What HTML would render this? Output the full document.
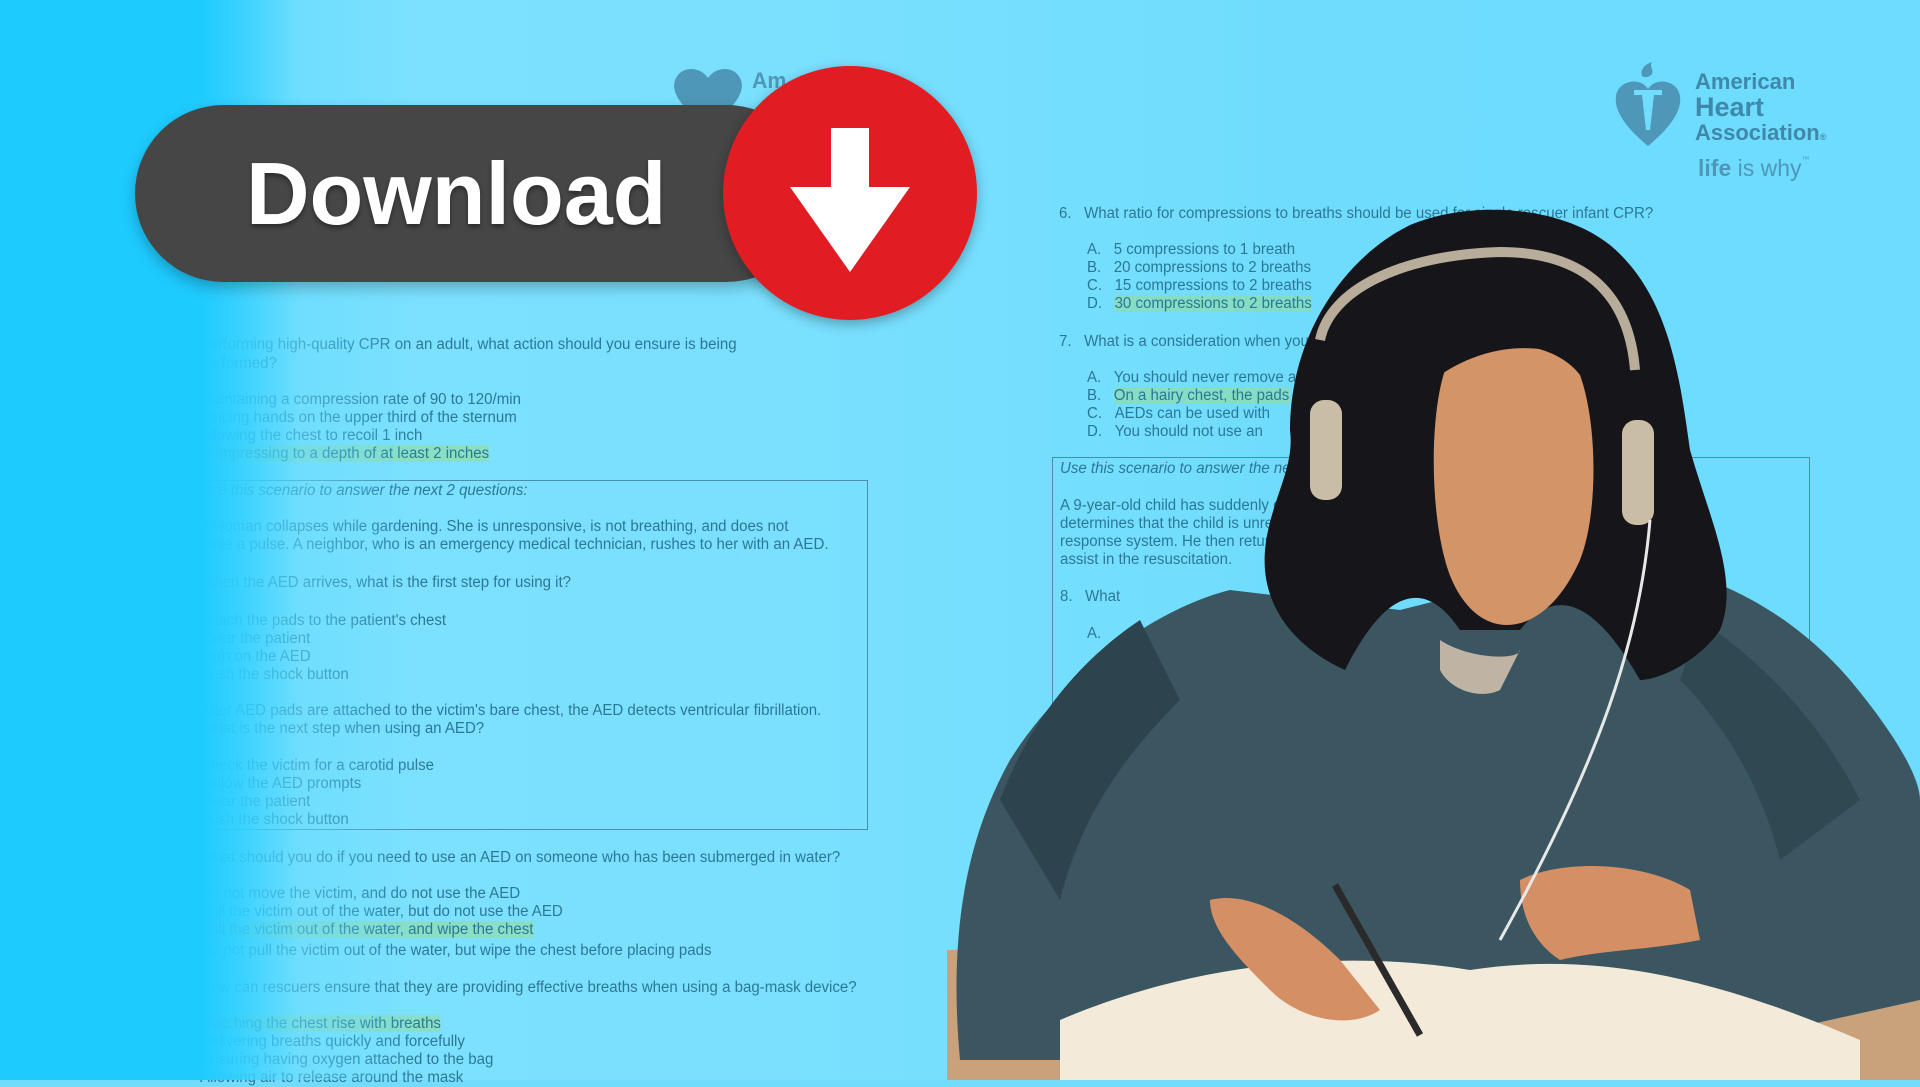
<!DOCTYPE html>
<html><head><meta charset="utf-8"><style>
*{margin:0;padding:0;box-sizing:border-box}
body{width:1920px;height:1080px;overflow:hidden;position:relative;background:#72dcfd;font-family:"Liberation Sans",sans-serif}
.bg{position:absolute;inset:0;background:linear-gradient(90deg,#7ee2ff 0%,#7ae0fe 40%,#6fdcfd 70%,#6ddcff 100%)}
.t{position:absolute;font-size:15.5px;color:#2b7896;white-space:nowrap;line-height:18px;transform:scaleX(.97);transform-origin:left}
.i{font-style:italic}
.hl{background:rgba(150,220,150,.55)}
.fade{position:absolute;left:0;top:0;width:460px;height:1080px;background:linear-gradient(90deg,#1ecbff 0,#1ecbff 200px,rgba(50,208,255,.9) 240px,rgba(100,220,255,.55) 300px,rgba(110,222,255,0) 420px)}
.box{position:absolute;border:1.5px solid #4a8fa8}
.pill{position:absolute;left:135px;top:105px;width:680px;height:177px;border-radius:90px;background:#464646;box-shadow:0 6px 14px rgba(0,0,0,.25)}
.dl{position:absolute;left:246px;top:143px;font-size:88px;font-weight:bold;color:#fff;letter-spacing:0px;text-shadow:0 3px 5px rgba(0,0,0,.4)}
.circ{position:absolute;left:723px;top:66px;width:254px;height:254px;border-radius:50%;background:#e21c23;box-shadow:0 4px 12px rgba(0,0,0,.3)}
</style></head><body>
<div class="bg"></div>

<div class="t" style="left:200px;top:336px">Performing high-quality CPR on an adult, what action should you ensure is being</div>
<div class="t" style="left:200px;top:355px">performed?</div>
<div class="t" style="left:200px;top:391px">Maintaining a compression rate of 90 to 120/min</div>
<div class="t" style="left:200px;top:409px">Placing hands on the upper third of the sternum</div>
<div class="t" style="left:200px;top:427px">Allowing the chest to recoil 1 inch</div>
<div class="t" style="left:200px;top:445px"><span class="hl">Compressing to a depth of at least 2 inches</span></div>
<div class="box" style="left:190px;top:480px;width:678px;height:350px"></div>
<div class="t i" style="left:200px;top:482px">Use this scenario to answer the next 2 questions:</div>
<div class="t" style="left:200px;top:518px">A woman collapses while gardening. She is unresponsive, is not breathing, and does not</div>
<div class="t" style="left:200px;top:536px">have a pulse. A neighbor, who is an emergency medical technician, rushes to her with an AED.</div>
<div class="t" style="left:200px;top:574px">When the AED arrives, what is the first step for using it?</div>
<div class="t" style="left:200px;top:612px">Attach the pads to the patient's chest</div>
<div class="t" style="left:200px;top:630px">Clear the patient</div>
<div class="t" style="left:200px;top:648px">Turn on the AED</div>
<div class="t" style="left:200px;top:666px">Push the shock button</div>
<div class="t" style="left:200px;top:702px">After AED pads are attached to the victim's bare chest, the AED detects ventricular fibrillation.</div>
<div class="t" style="left:200px;top:720px">What is the next step when using an AED?</div>
<div class="t" style="left:200px;top:757px">Check the victim for a carotid pulse</div>
<div class="t" style="left:200px;top:775px">Follow the AED prompts</div>
<div class="t" style="left:200px;top:793px">Clear the patient</div>
<div class="t" style="left:200px;top:811px">Push the shock button</div>
<div class="t" style="left:200px;top:849px">What should you do if you need to use an AED on someone who has been submerged in water?</div>
<div class="t" style="left:200px;top:885px">Do not move the victim, and do not use the AED</div>
<div class="t" style="left:200px;top:903px">Pull the victim out of the water, but do not use the AED</div>
<div class="t" style="left:200px;top:921px"><span class="hl">Pull the victim out of the water, and wipe the chest</span></div>
<div class="t" style="left:200px;top:942px">Do not pull the victim out of the water, but wipe the chest before placing pads</div>
<div class="t" style="left:200px;top:979px">How can rescuers ensure that they are providing effective breaths when using a bag-mask device?</div>
<div class="t" style="left:200px;top:1015px"><span class="hl">Watching the chest rise with breaths</span></div>
<div class="t" style="left:200px;top:1033px">Delivering breaths quickly and forcefully</div>
<div class="t" style="left:200px;top:1051px">Ensuring having oxygen attached to the bag</div>
<div class="t" style="left:200px;top:1069px">Allowing air to release around the mask</div>
<div class="fade"></div>

<svg style="position:absolute;left:668px;top:60px" width="80" height="70" viewBox="0 0 80 70"><path d="M40 68 C10 45 2 30 8 18 C14 6 32 6 40 18 C48 6 66 6 72 18 C78 30 70 45 40 68Z" fill="#4f97b8"/></svg>
<div class="t" style="left:752px;top:72px;font-size:22px;font-weight:bold;color:#4f97b8">Am</div>

<div class="t" style="left:1059px;top:205px">6.&nbsp;&nbsp;&nbsp;What ratio for compressions to breaths should be used for single rescuer infant CPR?</div>
<div class="t" style="left:1087px;top:241px">A.&nbsp;&nbsp;&nbsp;5 compressions to 1 breath</div>
<div class="t" style="left:1087px;top:259px">B.&nbsp;&nbsp;&nbsp;20 compressions to 2 breaths</div>
<div class="t" style="left:1087px;top:277px">C.&nbsp;&nbsp;&nbsp;15 compressions to 2 breaths</div>
<div class="t" style="left:1087px;top:295px">D.&nbsp;&nbsp;&nbsp;<span class="hl">30 compressions to 2 breaths</span></div>
<div class="t" style="left:1059px;top:333px">7.&nbsp;&nbsp;&nbsp;What is a consideration when you use an AED?</div>
<div class="t" style="left:1087px;top:369px">A.&nbsp;&nbsp;&nbsp;You should never remove a medication patch before placing the AED pads</div>
<div class="t" style="left:1087px;top:387px">B.&nbsp;&nbsp;&nbsp;<span class="hl">On a hairy chest, the pads</span></div>
<div class="t" style="left:1087px;top:405px">C.&nbsp;&nbsp;&nbsp;AEDs can be used with</div>
<div class="t" style="left:1087px;top:423px">D.&nbsp;&nbsp;&nbsp;You should not use an</div>
<div class="box" style="left:1052px;top:457px;width:758px;height:300px"></div>
<div class="t i" style="left:1060px;top:460px">Use this scenario to answer the next 2 questions:</div>
<div class="t" style="left:1060px;top:497px">A 9-year-old child has suddenly collapsed. The single rescuer</div>
<div class="t" style="left:1060px;top:515px">determines that the child is unresponsive and activates the emergency</div>
<div class="t" style="left:1060px;top:533px">response system. He then returns to the child. A second rescuer arrives to</div>
<div class="t" style="left:1060px;top:551px">assist in the resuscitation.</div>
<div class="t" style="left:1060px;top:588px">8.&nbsp;&nbsp;&nbsp;What</div>
<div class="t" style="left:1087px;top:625px">A.</div>

<svg style="position:absolute;left:1612px;top:60px" width="72" height="90" viewBox="0 0 72 90">
<path d="M36 86 C12 66 2 50 4 36 C6 24 18 20 26 22 C31 23 34 26 36 29 C38 26 41 23 46 22 C54 20 66 24 68 36 C70 50 60 66 36 86Z" fill="#4f97b8"/>
<path d="M30 16 C28 8 34 4 40 2 C37 7 42 9 40 14 C38 17 33 18 30 16Z" fill="#4f97b8"/>
<rect x="22" y="30" width="28" height="5" fill="#72dcfd"/><path d="M30 35 L42 35 L38 70 L34 70Z" fill="#72dcfd"/>
</svg>
<div style="position:absolute;left:1695px;top:70px;color:#3f88aa;font-weight:bold;font-size:22px;line-height:24px">American<br><span style="font-size:27px;line-height:26px">Heart</span><br>Association<span style="font-size:9px">®</span></div>
<div style="position:absolute;left:1698px;top:155px;color:#4f97b8;font-size:23px"><b>life</b> is why<span style="font-size:8px;vertical-align:top">™</span></div>

<svg style="position:absolute;left:0;top:0" width="1920" height="1080" viewBox="0 0 1920 1080">
<path d="M947 950 L1920 935 L1920 1080 L947 1080Z" fill="#c9a27c"/>
<path d="M960 1060 C950 950 960 850 1010 760 C1060 680 1150 610 1230 590 L1400 610 L1600 560 C1700 560 1790 610 1850 680 C1900 740 1920 780 1920 800 L1920 1000 L1740 1040 L1200 1060Z" fill="#3b5661"/>
<path d="M1000 800 C1030 720 1080 660 1140 620 L1180 700 C1120 760 1080 820 1060 900Z" fill="#2d444e"/>
<path d="M1700 620 C1760 660 1820 720 1860 800 L1780 860 C1760 780 1720 720 1680 680Z" fill="#2f4953"/>
<path d="M1290 430 C1290 340 1340 260 1410 225 C1470 200 1560 205 1610 245 C1670 295 1680 380 1690 450 C1710 520 1740 580 1720 630 C1700 660 1660 680 1640 680 C1600 610 1560 580 1520 630 L1460 630 C1420 570 1380 600 1345 670 C1300 650 1260 610 1265 550 C1270 500 1295 470 1290 430Z" fill="#15151a"/>
<path d="M1445 370 C1465 335 1550 335 1580 375 C1598 425 1598 515 1580 560 C1560 605 1532 625 1507 625 C1478 625 1455 598 1445 560 C1430 505 1430 415 1445 370Z" fill="#d39467"/>
<path d="M1440 375 C1470 300 1560 300 1595 370 C1560 345 1500 335 1440 375Z" fill="#15151a"/>
<path d="M1320 340 C1330 290 1400 255 1500 252 C1600 252 1630 310 1635 370" stroke="#b8ad9a" stroke-width="10" fill="none"/>
<rect x="1310" y="400" width="32" height="100" rx="14" fill="#c9bda6"/>
<rect x="1622" y="420" width="32" height="105" rx="14" fill="#c9bda6"/>
<path d="M1440 640 C1470 660 1520 660 1520 650 L1500 690 C1480 700 1450 690 1440 670Z" fill="#bfb3a3"/>
<path d="M1060 1020 C1200 960 1350 950 1470 970 C1600 950 1720 980 1860 1040 L1860 1080 L1060 1080Z" fill="#f3ead9"/>
<path d="M1210 900 C1250 890 1300 920 1340 960 L1380 1010 C1350 1030 1300 1020 1270 990 C1240 960 1210 930 1210 900Z" fill="#d48f64"/>
<path d="M1520 880 C1560 860 1640 860 1690 890 L1700 940 C1650 950 1600 950 1560 960 C1530 940 1520 910 1520 880Z" fill="#d48f64"/>
<line x1="1335" y1="885" x2="1420" y2="1035" stroke="#2a2a2a" stroke-width="7"/>
<path d="M1650 520 C1640 640 1600 760 1500 940" stroke="#e8e8e8" stroke-width="3" fill="none"/>
</svg>

<div class="pill"></div>
<div class="dl">Download</div>
<div class="circ"></div>
<svg style="position:absolute;left:790px;top:125px" width="120" height="150" viewBox="0 0 120 150">
<path d="M41 3 L79 3 L79 62 L120 62 L60 147 L0 62 L41 62Z" fill="#fff"/>
</svg>
</body></html>
